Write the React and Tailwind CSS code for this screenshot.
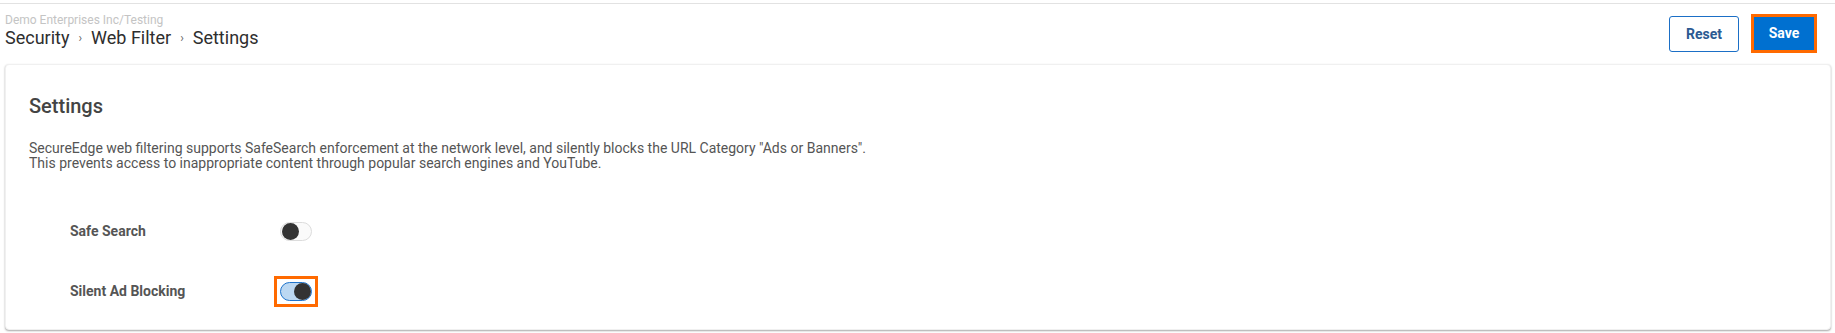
import { useState } from "react";

function Toggle({ on, onChange, focused }) {
  return (
    <div
      className={`inline-flex p-[3px] border-[3px] ${
        focused ? "border-[#ff6a00]" : "border-transparent"
      }`}
    >
      <button
        onClick={onChange}
        className={`relative w-[32px] h-[19px] rounded-full border ${
          on ? "bg-[#bcd8f2] border-[#1f74cc]" : "bg-[#fafafa] border-[#dcdcdc]"
        }`}
      >
        <span
          className={`absolute top-[0px] w-[17px] h-[17px] rounded-full bg-[#333333] ${
            on ? "left-[13px]" : "left-[1px]"
          }`}
        />
      </button>
    </div>
  );
}

export default function App() {
  const [safeSearch, setSafeSearch] = useState(false);
  const [adBlocking, setAdBlocking] = useState(true);

  const rows = [
    { label: "Safe Search", on: safeSearch, toggle: () => setSafeSearch(!safeSearch), focused: false },
    { label: "Silent Ad Blocking", on: adBlocking, toggle: () => setAdBlocking(!adBlocking), focused: true },
  ];

  return (
    <div
      className="w-full h-[333px] bg-white overflow-hidden"
      style={{ fontFamily: "Roboto, 'Liberation Sans', sans-serif" }}
    >
      <div className="mt-[3px] border-t border-[#e2e2e2]" />

      {/* HEADER */}
      <div className="flex justify-between items-start pl-[5px] pr-[18px]">
        <div className="pt-[9px]">
          <div className="text-[12px] leading-[14px] text-[#c4c4c4]">
            Demo Enterprises Inc/Testing
          </div>
          <div className="flex items-center text-[18px] leading-[22px] text-[#2e2e2e]">
            <span>Security</span>
            <span className="text-[12px] text-[#666] mx-[9px]">›</span>
            <span>Web Filter</span>
            <span className="text-[12px] text-[#666] mx-[9px]">›</span>
            <span>Settings</span>
          </div>
        </div>

        <div className="flex items-start gap-[12px] pt-[10px]">
          <button className="mt-[2px] w-[70px] h-[36px] rounded-[3px] border border-[#1b6fc6] text-[14px] font-bold text-[#2b5a92] bg-white">
            Reset
          </button>
          <div className="border-[3px] border-[#ff6a00]">
            <button className="w-[60px] h-[33px] bg-[#0070d0] text-[14px] font-bold text-white">
              Save
            </button>
          </div>
        </div>
      </div>

      {/* CARD */}
      <div className="mx-[5px] mt-[11px] w-[1826px] h-[266px] bg-white rounded-[4px] border border-[#f0f0f0] shadow-[0_1px_2px_rgba(0,0,0,0.35)] pl-[23px] pt-[29px]">
        <h2 className="text-[20px] leading-[24px] font-medium text-[#444]">Settings</h2>
        <p className="mt-[23px] text-[14px] leading-[15px] text-[#555]">
          SecureEdge web filtering supports SafeSearch enforcement at the network level, and silently blocks the URL Category "Ads or Banners".
          <br />
          This prevents access to inappropriate content through popular search engines and YouTube.
        </p>

        <div className="mt-[30px]">
          {rows.map((row) => (
            <div key={row.label} className="flex items-center h-[60px] pl-[41px]">
              <span className="w-[204px] text-[14px] font-bold text-[#555]">{row.label}</span>
              <Toggle on={row.on} onChange={row.toggle} focused={row.focused} />
            </div>
          ))}
        </div>
      </div>
    </div>
  );
}
